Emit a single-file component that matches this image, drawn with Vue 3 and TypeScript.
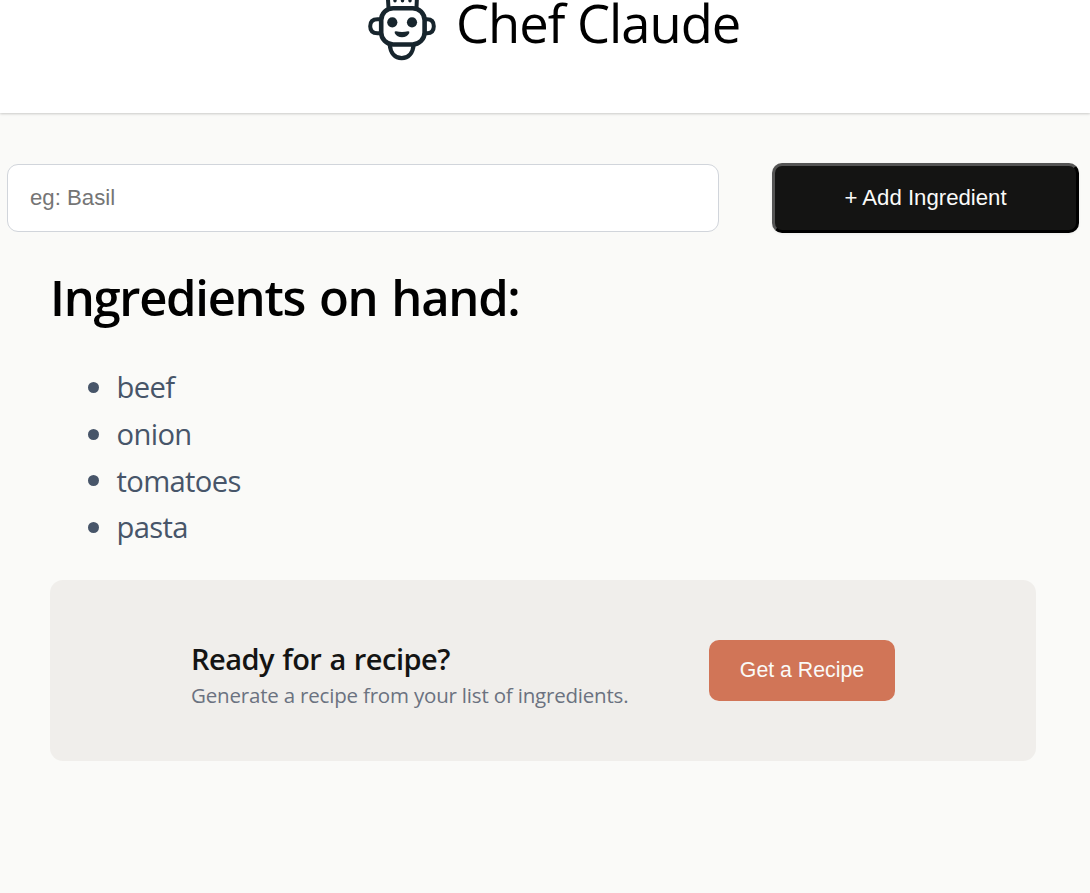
<script setup lang="ts">
import { ref } from 'vue'

const draft = ref<string>('')
const ingredients = ref<string[]>(['beef', 'onion', 'tomatoes', 'pasta'])

function addIngredient(): void {
  const name = draft.value.trim()
  if (name) {
    ingredients.value.push(name)
    draft.value = ''
  }
}
</script>

<template>
  <div class="page">
    <header class="header">
      <div class="brand">
        <svg class="logo" viewBox="0 0 70 78" fill="none" stroke="#17252d" aria-hidden="true">
          <path d="M21.500 24 20.300 4H50.300L49.500 24" stroke-width="4" />
          <path d="M28 8v8.700M35.500 8v8.700M43 8v8.700" stroke-width="3.400" stroke-linecap="round" />
          <path d="M14 35.300H10.500C5.500 35.300 3.200 38 3.200 42.300S5.500 49.300 10.500 49.300H14" stroke-width="4" />
          <path d="M58 35.300H60C64.700 35.300 66.800 38 66.800 42.300S64.700 49.300 60 49.300H58" stroke-width="4" />
          <path d="M22.800 61C23.500 69 28 74.200 34.700 74.200S45.900 69 46.600 61" stroke-width="4.200" />
          <rect x="14.200" y="24.200" width="43.400" height="36.300" rx="12" fill="#fff" stroke-width="4.600" />
          <g fill="#17252d" stroke="none">
            <circle cx="25.300" cy="38.300" r="5.100" />
            <circle cx="45" cy="38.300" r="5.100" />
            <path d="M29 47.200Q35 48.600 41 47.200Q43 47 42.200 49.300Q40 53.200 35 53.200T27.800 49.300Q27 47 29 47.200Z" />
          </g>
        </svg>
        <h1 class="title">Chef Claude</h1>
      </div>
    </header>
    <main>
      <form class="add-form" @submit.prevent="addIngredient">
        <input v-model="draft" class="field" type="text" placeholder="eg: Basil" aria-label="Add ingredient" />
        <button class="add">+ Add Ingredient</button>
      </form>
      <section class="content">
        <h2 class="heading">Ingredients on hand:</h2>
        <ul class="list">
          <li v-for="item in ingredients" :key="item" class="item"><span class="item-name">{{ item }}</span></li>
        </ul>
        <div class="callout">
          <div class="callout-text">
            <h3 class="ready">Ready for a recipe?</h3>
            <p class="hint">Generate a recipe from your list of ingredients.</p>
          </div>
          <button class="get" type="button">Get a Recipe</button>
        </div>
      </section>
    </main>
  </div>
</template>

<style>
html, body { margin: 0; background: #fafaf8; }
</style>

<style scoped>
.page {
  min-height: 893px;
  background: #fafaf8;
  font-family: "Open Sans", "Noto Sans", sans-serif;
}
.header {
  box-sizing: border-box;
  height: 113px;
  background: #fff;
  box-shadow: 0 1px 3px rgba(0, 0, 0, .1), 0 1px 2px rgba(0, 0, 0, .1);
}
.brand {
  display: flex;
  align-items: center;
  height: 46px;
  padding-left: 367px;
}
.logo { flex: none; width: 70px; height: 78px; }
.title { margin: 0 0 0 19px; font-size: 52.500px; font-weight: 400; line-height: 44px; letter-spacing: -1px; white-space: nowrap; }
.add-form {
  display: flex;
  align-items: center;
  height: 70px;
  padding: 50px 11px 0 7px;
}
.field, .add, .get { box-sizing: border-box; font-family: "Liberation Sans", Arial, sans-serif; }
.field {
  flex: 1;
  min-width: 0;
  height: 68px;
  margin-right: 53px;
  padding: 0 22px;
  border: 1px solid #d1d5db;
  border-radius: 11px;
  background: #fff;
  font-size: 22.2px;
}
.field::placeholder { color: #757575; opacity: 1; }
.add {
  width: 307px;
  height: 70px;
  border: 3px outset #000;
  border-radius: 10px;
  background: #141413;
  color: #fafaf8;
  font-size: 22.2px;
  box-shadow: 0 1px 3px rgba(0, 0, 0, .06);
}
.content { padding: 29px 54px 0 50px; }
.heading { margin: 0; font-size: 49px; font-weight: 600; line-height: 70px; letter-spacing: -1.3px; word-spacing: 2.500px; white-space: nowrap; }
.list { margin: 32px 0 0; padding: 0; list-style: none; color: #475569; }
.item { display: flex; align-items: center; height: 46.8px; padding-left: 38px; font-size: 29.2px; line-height: 46.8px; letter-spacing: -.65px; }
.item::before { content: ""; width: 11px; height: 11px; margin-right: 17.500px; border-radius: 50%; background: #475569; }
.callout {
  display: flex;
  align-items: center;
  justify-content: space-between;
  box-sizing: border-box;
  height: 181px;
  margin-top: 29px;
  padding: 0 141px;
  border-radius: 13px;
  background: #f0eeeb;
}
.callout-text { padding-top: 8px; white-space: nowrap; }
.ready { margin: 0; color: #141413; font-size: 29px; font-weight: 600; line-height: 40px; letter-spacing: -.5px; word-spacing: 1px; }
.hint { margin: 0; color: #6b7280; font-size: 20.5px; line-height: 32px; letter-spacing: -.19px; }
.get {
  width: 186px;
  height: 61px;
  padding: 0 0 1px;
  border: 0;
  border-radius: 10px;
  background: #d17557;
  color: #fafaf8;
  font-size: 21.300px;
}
</style>
